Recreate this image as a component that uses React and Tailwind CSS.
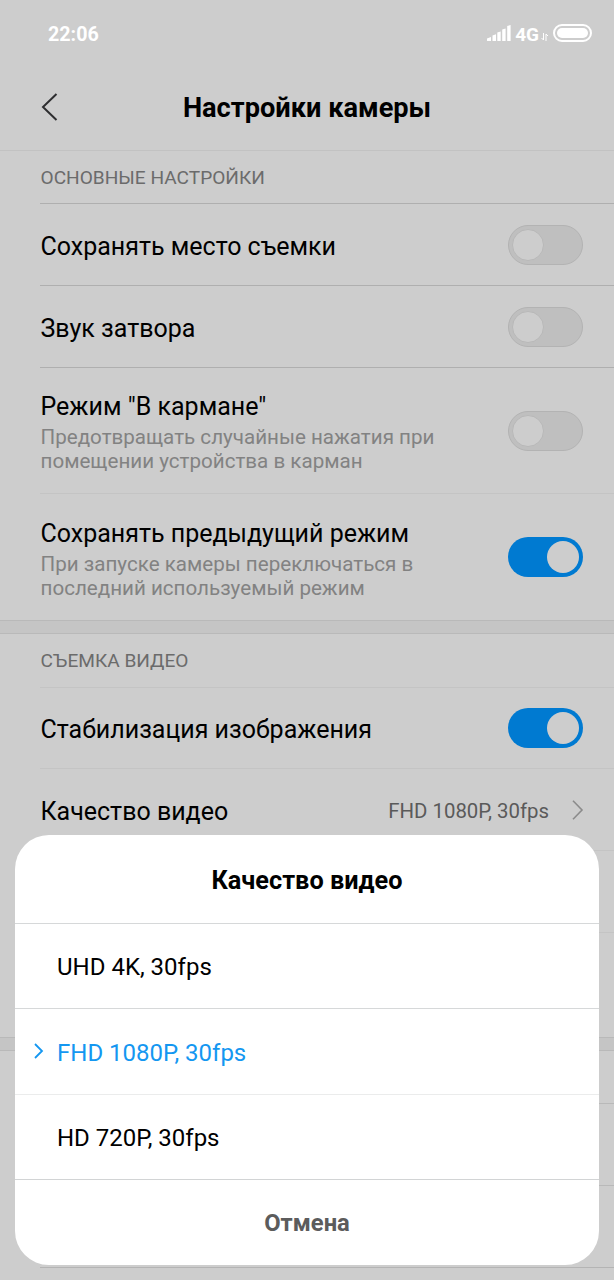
import { clsx } from "clsx";

const videoOptions = [
  { label: "UHD 4K, 30fps", border: "border-[#d6d8d9]" },
  { label: "FHD 1080P, 30fps", border: "border-[#ebecec]", selected: true },
  { label: "HD 720P, 30fps", border: "border-[#d2d4d5]" }
];

function StatusBar() {
  return (
    <div className="flex h-[66px] items-center justify-between pl-12 pr-[22px] text-white">
      <span className="pt-[3px] text-[19.700px] font-bold">22:06</span>
      <div className="flex items-center">
        <svg className="mb-0.5 h-[17px] w-6" viewBox="0 0 24 17" fill="currentColor">
          <path d="M0 17v-2.500l4-1.500v4zM5.500 11.500l3.500-1.200V17H5.500zM10.300 8.500l3.400-1V17h-3.400zM15.200 5.500l3.400-1V17h-3.400zM20.200 2l3.400-1v16h-3.400z" />
        </svg>
        <span className="ml-1 pt-[3px] text-[19px] font-bold leading-5">4G</span>
        <svg className="ml-0.5 mt-2 h-2 w-[7px]" viewBox="0 0 7 8" fill="none" stroke="currentColor">
          <path d="M2.500 0v7M2.500 7L.5 5M5 8V1M5 1l2 2" />
        </svg>
        <div className="ml-[5px] h-[18px] w-[39px] rounded-full border-2 border-white p-0.5">
          <div className="h-full rounded-full bg-white" />
        </div>
      </div>
    </div>
  );
}

function Toggle({ on }) {
  return (
    <div
      className={clsx(
        "flex h-10 w-[75px] shrink-0 items-center rounded-full",
        on ? "justify-end bg-[#007ad1] pr-1" : "border border-[#b3b3b3] bg-[#bfbfbf] pl-[3px]"
      )}
    >
      <div
        className={clsx(
          "size-8 rounded-full bg-[#cdcdcd]",
          !on && "border border-[#b8b8b8]"
        )}
      />
    </div>
  );
}

function SectionTitle({ children, className }) {
  return (
    <div className={clsx("ml-10 flex items-center border-b pl-[0.500px] text-[19.100px] text-[#6b6b6b]", className)}>
      {children}
    </div>
  );
}

function SettingRow({ title, description, className, children }) {
  return (
    <div className={clsx("ml-10 flex items-center justify-between border-b pl-[0.500px] pr-[31px]", className)}>
      <div className="pt-1">
        <div className="text-[25px] leading-[30px] text-black">{title}</div>
        {description && (
          <p className="mt-[3px] w-[420px] whitespace-pre-line text-[20.600px] leading-6 text-[#828282]">
            {description}
          </p>
        )}
      </div>
      {children}
    </div>
  );
}

function SectionGap() {
  return <div className="h-3.5 border-y border-[#b9b9b9] bg-[#c5c5c5]" />;
}

function QualityDialog() {
  return (
    <div className="absolute left-[15px] top-[835px] h-[430px] w-[584px] overflow-hidden rounded-[34px] bg-white">
      <h2 className="flex h-[89px] items-center justify-center border-b border-[#d6d8d9] pt-[3px] text-[25.300px] font-bold text-black">
        Качество видео
      </h2>
      {videoOptions.map(({ label, border, selected }) => (
        <div
          key={label}
          className={clsx(
            "flex h-[85.400px] items-center border-b pl-[18px] text-2xl",
            border,
            selected ? "text-[#1497f1]" : "text-black"
          )}
        >
          <div className="w-6">
            {selected && (
              <svg className="mb-0.5 h-4 w-[11px]" viewBox="0 0 11 16" fill="none" stroke="currentColor" strokeWidth="1.800">
                <path d="M2 1l7 7-7 7" />
              </svg>
            )}
          </div>
          <span className="pt-0.5">{label}</span>
        </div>
      ))}
      <button className="flex h-[86px] w-full items-center justify-center pt-0.5 text-[23.800px] font-bold text-[#5c5c5c]">
        Отмена
      </button>
    </div>
  );
}

function App() {
  return (
    <main className="relative h-[1280px] w-[614px] overflow-hidden bg-[#cdcdcd] font-['Roboto',sans-serif]">
      <StatusBar />
      <header className="flex h-[85px] items-center border-b border-[#c2c2c2] pl-10">
        <svg className="mb-0.5 h-7 w-5" viewBox="0 0 20 28" fill="none" stroke="#2e2e30" strokeWidth="2">
          <path d="M16.500 1L3 14l13.500 13" />
        </svg>
        <h1 className="mr-[60px] flex-1 text-center text-[27.200px] font-bold text-black">Настройки камеры</h1>
      </header>

      <SectionTitle className="h-[53px] border-[#afafaf] pt-[3px]">ОСНОВНЫЕ НАСТРОЙКИ</SectionTitle>
      <SettingRow title="Сохранять место съемки" className="h-[82px] border-[#afafaf]">
        <Toggle />
      </SettingRow>
      <SettingRow title="Звук затвора" className="h-[82px] border-[#afafaf]">
        <Toggle />
      </SettingRow>
      <SettingRow
        title={'Режим "В кармане"'}
        description={"Предотвращать случайные нажатия при\nпомещении устройства в карман"}
        className="h-[126px] border-[#c4c4c4]"
      >
        <Toggle />
      </SettingRow>
      <SettingRow
        title="Сохранять предыдущий режим"
        description={"При запуске камеры переключаться в\nпоследний используемый режим"}
        className="h-[126px] border-transparent pt-px"
      >
        <Toggle on />
      </SettingRow>

      <SectionGap />
      <SectionTitle className="h-[54px] border-[#c4c4c4] pt-px">СЪЕМКА ВИДЕО</SectionTitle>
      <SettingRow title="Стабилизация изображения" className="h-[81px] border-[#c4c4c4]">
        <Toggle on />
      </SettingRow>
      <SettingRow title="Качество видео" className="h-[82px] border-[#c4c4c4]">
        <div className="flex items-center text-[20.400px] text-[#5a5a5a]">
          <span className="pt-[3px]">FHD 1080P, 30fps</span>
          <svg className="-mr-px ml-[22px] mt-px h-5 w-[13px]" viewBox="0 0 13 20" fill="none" stroke="#8b8b8b" strokeWidth="1.600">
            <path d="M2 .8L11 10l-9 9.200" />
          </svg>
        </div>
      </SettingRow>
      <SettingRow className="h-[82px] border-[#c4c4c4]" />
      <SettingRow className="h-[104px] border-transparent" />

      <SectionGap />
      <SectionTitle className="h-[53px] border-[#b9b9b9]" />
      <SettingRow className="h-[82px] border-[#b9b9b9]" />
      <SettingRow className="h-[82px] border-[#b4b4b4]" />

      <QualityDialog />
    </main>
  );
}

export default App;
